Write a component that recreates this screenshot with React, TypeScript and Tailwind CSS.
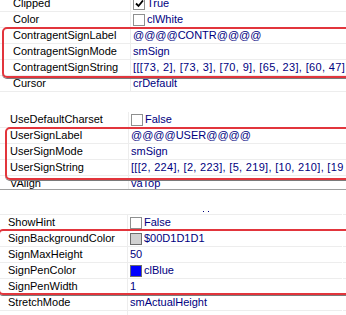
import React from 'react'

type Row = { label: string; value: React.ReactNode }

const Check = ({ checked }: { checked?: boolean }) => (
  <span className="inline-flex h-[12px] w-[12px] shrink-0 items-center justify-center border border-[#8e8f8f] bg-white">
    {checked && (
      <svg width="9" height="9" viewBox="0 0 9 9">
        <path d="M1 4.5 L3.5 7 L8 1.5" stroke="#000" strokeWidth="1.8" fill="none" />
      </svg>
    )}
  </span>
)

const Swatch = ({ color }: { color: string }) => (
  <span className="inline-block h-[12px] w-[12px] shrink-0 border border-[#6d6d6d]" style={{ backgroundColor: color }} />
)

const Val = ({ box, text }: { box?: React.ReactNode; text: string }) => (
  <span className="flex items-center gap-[2px]">
    {box}
    <span>{text}</span>
  </span>
)

const Grid = ({ rows, labelPad, divider }: { rows: Row[]; labelPad: string; divider: string }) => (
  <div>
    {rows.map((r) => (
      <div key={r.label} className="flex h-[16px] border-b border-[#ededed]">
        <div className={`${divider} ${labelPad} shrink-0 border-r border-[#ededed] text-black leading-[15px]`}>{r.label}</div>
        <div className="flex-1 overflow-hidden whitespace-nowrap pl-[2px] leading-[15px] text-[#000080]">{r.value}</div>
      </div>
    ))}
  </div>
)

const RedBox = ({ className }: { className: string }) => (
  <div className={`pointer-events-none absolute rounded-[5px] border-2 border-[#e2353c] shadow-[0_1px_0_#7a7a7a] ${className}`} />
)

export default function App() {
  const first: Row[] = [
    { label: 'Clipped', value: <Val box={<Check checked />} text="True" /> },
    { label: 'Color', value: <Val box={<Check />} text="clWhite" /> },
    { label: 'ContragentSignLabel', value: '@@@@CONTR@@@@' },
    { label: 'ContragentSignMode', value: 'smSign' },
    { label: 'ContragentSignString', value: <span className="tracking-[0.35px]">[[[73, 2], [73, 3], [70, 9], [65, 23], [60, 47]</span> },
    { label: 'Cursor', value: 'crDefault' },
  ]
  const second: Row[] = [
    { label: 'UseDefaultCharset', value: <Val box={<Check />} text="False" /> },
    { label: 'UserSignLabel', value: '@@@@USER@@@@' },
    { label: 'UserSignMode', value: 'smSign' },
    { label: 'UserSignString', value: <span className="tracking-[0.3px]">[[[2, 224], [2, 223], [5, 219], [10, 210], [19</span> },
    { label: 'VAlign', value: 'vaTop' },
  ]
  const third: Row[] = [
    { label: 'ShowHint', value: <Val box={<Check />} text="False" /> },
    { label: 'SignBackgroundColor', value: <Val box={<Swatch color="#d1d1d1" />} text="$00D1D1D1" /> },
    { label: 'SignMaxHeight', value: '50' },
    { label: 'SignPenColor', value: <Val box={<Swatch color="#0000ff" />} text="clBlue" /> },
    { label: 'SignPenWidth', value: '1' },
    { label: 'StretchMode', value: 'smActualHeight' },
  ]

  return (
    <div className="h-[315px] w-[346px] overflow-hidden bg-white text-[11px] font-['Liberation_Sans',Arial,sans-serif]">
      <div className="relative h-[100px] overflow-hidden">
        <div className="-mt-[4px]">
          <Grid rows={first} labelPad="pl-[13px]" divider="w-[131px]" />
        </div>
        <RedBox className="left-[2px] top-[27px] h-[51px] w-[360px]" />
      </div>

      <div className="relative h-[90px] overflow-hidden border-b border-[#a0a0a0] pt-[12px]">
        <Grid rows={second} labelPad="pl-[10px]" divider="w-[129px]" />
        <RedBox className="left-[5px] top-[27px] h-[53px] w-[360px]" />
      </div>

      <div className="relative h-[125px] overflow-hidden pt-[24px]">
        <div className="absolute left-[203px] top-[21px] h-[1px] w-[1px] bg-[#000080]" />
        <div className="absolute left-[208px] top-[21px] h-[1px] w-[1px] bg-[#000080]" />
        <div className="border-t border-[#ededed]">
          <Grid rows={third} labelPad="pl-[8px]" divider="w-[128px]" />
          <div className="h-[16px] w-[128px] border-r border-[#ededed]" />
        </div>
        <div className="absolute bottom-0 left-[342px] top-[24px] w-[1px] bg-white" />
        <RedBox className="-left-[2px] top-[39px] h-[66px] w-[360px]" />
      </div>
    </div>
  )
}
